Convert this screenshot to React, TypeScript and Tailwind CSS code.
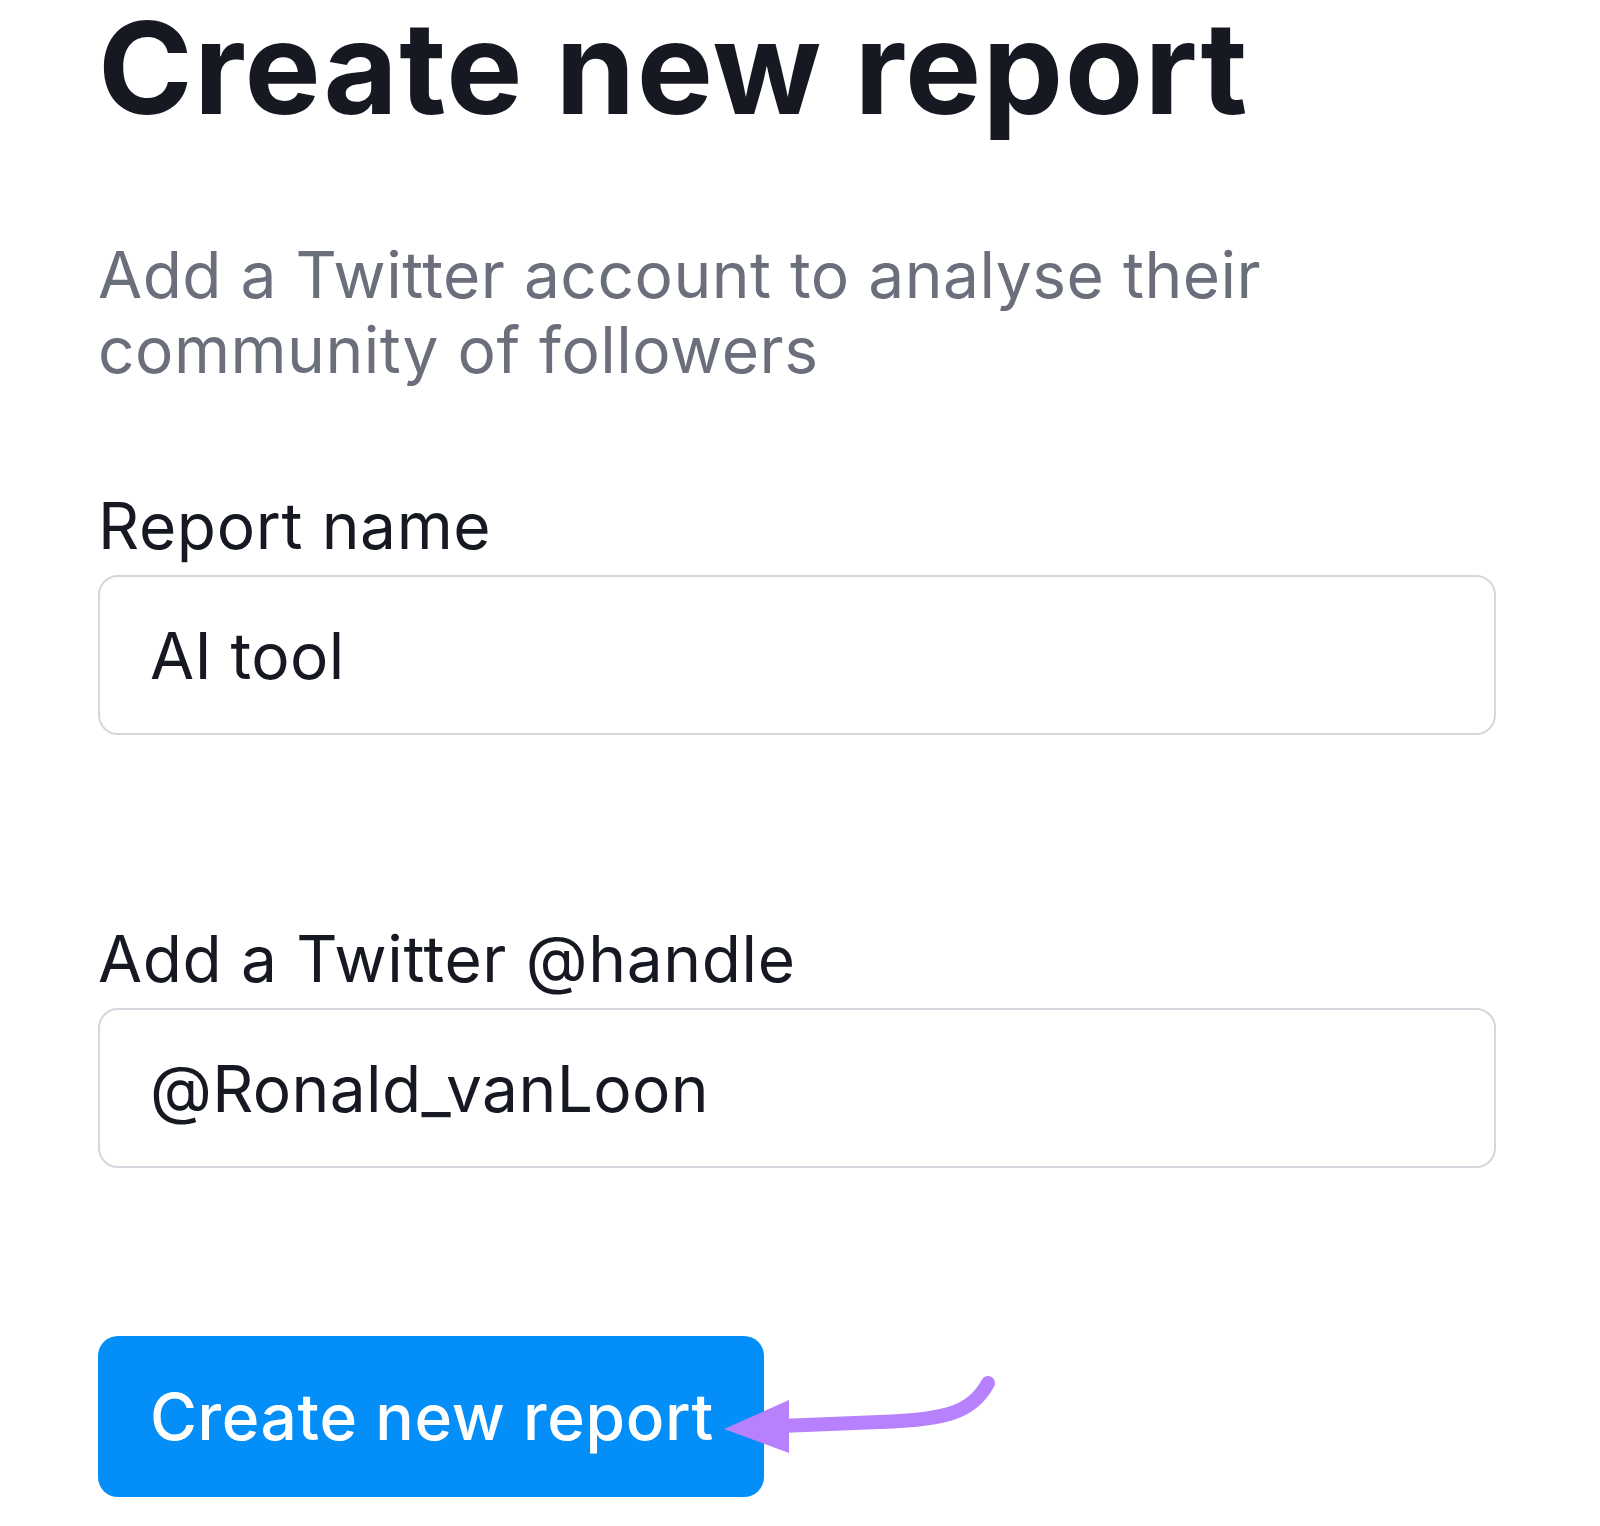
const fields = [
  { label: "Report name", value: "AI tool" },
  { label: "Add a Twitter @handle", value: "@Ronald_vanLoon" },
];

function Arrow() {
  return (
    <svg
      className="pointer-events-none absolute left-[700px] top-[1360px] h-[110px] w-[310px]"
      viewBox="700 1360 310 110"
      fill="none"
    >
      <path
        d="M988 1379 C 973 1408, 946 1416, 880 1418 L 780 1422"
        stroke="#b780fc"
        strokeWidth="14"
        strokeLinecap="round"
      />
      <polygon points="724,1425 789,1396 789,1449" fill="#b780fc" />
    </svg>
  );
}

export default function App() {
  return (
    <main className="relative min-h-[1526px] bg-white pl-[98px] font-['Inter',sans-serif]">
      <div className="w-[1398px]">
        <h1 className="mt-[4px] whitespace-nowrap text-[128px] font-bold leading-none tracking-[0.011em] text-[#161922]">
          Create new report
        </h1>

        <p className="mt-[105px] text-[64px] leading-[75px] tracking-[0.008em] text-[#6b6f7b]">
          Add a Twitter account to analyse their
          <br />
          community of followers
        </p>

        <form className="mt-[107px]">
          {fields.map((field, index) => (
            <div key={field.label} className={index > 0 ? "mt-[192px]" : ""}>
              <label className="block text-[64px] leading-none tracking-[0.01em] text-[#161922]">
                {field.label}
              </label>
              <input
                readOnly
                defaultValue={field.value}
                className="mt-[17px] block h-[160px] w-full rounded-[20px] border-2 border-[#d5d7de] bg-white px-[50px] font-['Inter',sans-serif] text-[64px] tracking-[0.006em] text-[#161922] outline-none"
              />
            </div>
          ))}

          <button
            type="button"
            className="mt-[168px] flex h-[161px] w-[666px] items-center justify-start whitespace-nowrap rounded-[20px] bg-[#038ef8] pl-[52px] text-[64px] font-medium tracking-[0.01em] text-white"
          >
            Create new report
          </button>
        </form>
      </div>

      <Arrow />
    </main>
  );
}
